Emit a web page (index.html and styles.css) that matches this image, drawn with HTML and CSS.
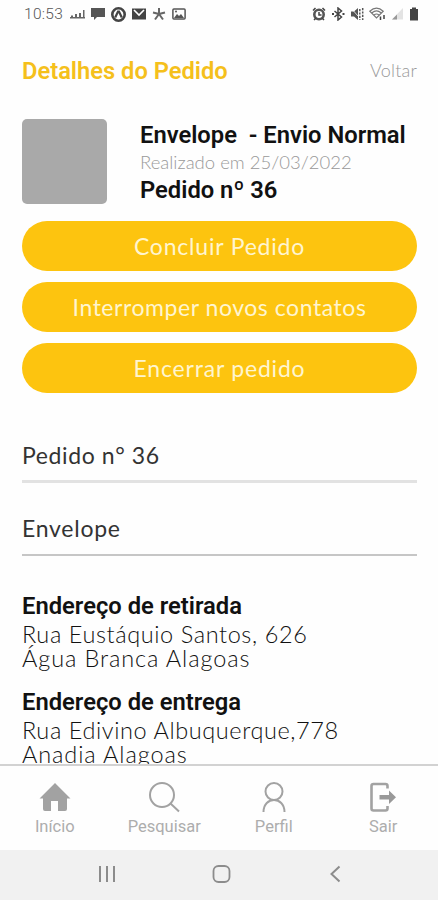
FILE: index.html
```html
<!DOCTYPE html>
<html lang="pt-BR">
<head>
  <meta charset="UTF-8" />
  <meta name="viewport" content="width=device-width, initial-scale=1.0" />
  <title>Detalhes do Pedido</title>
  <link rel="stylesheet" href="styles.css">
</head>
<body>

  <!-- Status bar -->
  <div class="status-bar">
    <span class="clock">10:53</span>
    <div class="status-left">
      <svg width="15" height="14" viewBox="0 0 15 14" fill="#666"><path d="M0 10h15v1.600H0zM1 8.500h2V10H1zM5 7h2v3H5zM9 6h2v4H9zM13 3h1.500v7H13z"/></svg>
      <svg width="14" height="14" viewBox="0 0 14 14" fill="#555"><path d="M0 1h14v9H6l-3 3v-3H0z"/></svg>
      <svg width="15" height="15" viewBox="0 0 15 15"><circle cx="7.500" cy="7.500" r="6.200" fill="none" stroke="#444" stroke-width="2.600"/><path d="M4.200 10.500L7 4.500h1l2.800 6" fill="none" stroke="#444" stroke-width="2.200"/></svg>
      <svg width="14" height="14" viewBox="0 0 14 14"><path d="M0 1.500h14v11H0z" fill="#444"/><path d="M2 3l5 5 5-5" fill="none" stroke="#fff" stroke-width="1.600"/></svg>
      <svg width="14" height="14" viewBox="0 0 14 14" fill="none" stroke="#666" stroke-width="2"><path d="M7 1v5M7 7L1 5.500M7 7l6-1.500M7 7l-4 5.500M7 7l4 5.500"/></svg>
      <svg width="14" height="14" viewBox="0 0 14 14"><rect x=".9" y="1.900" width="12.200" height="10.200" rx="1" fill="none" stroke="#555" stroke-width="1.500"/><path d="M2 11l3-4 2 2 2-2 3 4z" fill="#555"/><circle cx="4" cy="4.500" r="1" fill="#555"/></svg>
    </div>
    <div class="status-right">
      <svg width="14" height="14" viewBox="0 0 14 14"><circle cx="7" cy="7.500" r="4.700" fill="none" stroke="#555" stroke-width="2.600"/><path d="M7 5v3h2.500M1 3.500L3.500 1M13 3.500L10.500 1M2 13l2-2M12 13l-2-2" fill="none" stroke="#444" stroke-width="1.500"/></svg>
      <svg width="14" height="14" viewBox="0 0 14 14" fill="none" stroke="#444" stroke-width="1.500"><path d="M3.500 4l7 6-3.500 3V1l3.500 3-7 6"/><path d="M1 7h2M11.500 7h2" stroke-width="1.800"/></svg>
      <svg width="14" height="14" viewBox="0 0 14 14"><path d="M1 4.500h3L8 1v12L4 9.500H1z" fill="#555"/><path d="M1 1l7 8" stroke="#fff" stroke-width=".8"/><path d="M9.800 2v11M12.700 1v12" stroke="#555" stroke-width="1.500" stroke-dasharray="2.200 1.200"/></svg>
      <svg width="17" height="14" viewBox="0 0 17 14" fill="none" stroke="#777" stroke-width="1.200"><path d="M.8 4.200q6.700-6 13.400 0L7.500 11zM3 5.800q4.500-4 9 0M5 8q2.500-2 5 0"/><path d="M11.500 9.500v3.500M15 8v4" stroke="#444" stroke-width="1.500"/></svg>
      <svg width="13" height="14" viewBox="0 0 13 14"><path d="M1 12.500L12 1v11.500z" fill="#e3e3e3"/><path d="M1 12.500L6 7.500v5z" fill="#999"/></svg>
      <svg width="10" height="14" viewBox="0 0 10 14" fill="#444"><path d="M3 .5h4V2h2v11.500H1V2h2z"/></svg>
    </div>
  </div>

  <!-- Order details -->
  <main class="content">
    <header class="page-header">
      <h1>Detalhes do Pedido</h1>
      <a class="back">Voltar</a>
    </header>

    <section class="summary">
      <div class="thumb"></div>
      <div class="summary-info">
        <h2>Envelope&nbsp; - Envio Normal</h2>
        <p class="date">Realizado em 25/03/2022</p>
        <h2>Pedido nº 36</h2>
      </div>
    </section>

    <div class="actions">
      <button class="btn">Concluir Pedido</button>
      <button class="btn btn-stop">Interromper novos contatos</button>
      <button class="btn">Encerrar pedido</button>
    </div>

    <div class="field field-order">Pedido n° 36</div>
    <div class="field field-type">Envelope</div>

    <section class="address pickup">
      <h3>Endereço de retirada</h3>
      <p class="street">Rua Eustáquio Santos, 626</p>
      <p>Água Branca Alagoas</p>
    </section>

    <section class="address delivery">
      <h3>Endereço de entrega</h3>
      <p class="street">Rua Edivino Albuquerque,778</p>
      <p>Anadia Alagoas</p>
    </section>
  </main>

  <!-- Tabs -->
  <nav class="tabs">
    <a class="tab">
      <svg width="32" height="32" viewBox="0 0 32 32" fill="#a2a2a2"><path d="M16 1L.5 16.500H4v10.500q0 2 2 2h6V19h7v10h7q2 0 2-2V16.500h3.500z"/></svg>
      <span>Início</span>
    </a>
    <a class="tab">
      <svg width="32" height="32" viewBox="0 0 32 32" fill="none" stroke="#a2a2a2" stroke-width="2"><circle cx="14" cy="13" r="12"/><path d="M22.500 21.500l8.500 8"/></svg>
      <span>Pesquisar</span>
    </a>
    <a class="tab">
      <svg width="32" height="32" viewBox="0 0 32 32" fill="none" stroke="#a2a2a2" stroke-width="2"><circle cx="16" cy="9.500" r="8.500"/><path d="M5.500 30c0-16 21-16 21 0"/></svg>
      <span>Perfil</span>
    </a>
    <a class="tab">
      <svg width="32" height="32" viewBox="0 0 32 32"><path d="M20.500 6.500V4q0-2-2-2H6.500q-2 0-2 2v22.500q0 2 2 2h12q2 0 2-2V24" fill="none" stroke="#a2a2a2" stroke-width="2.600"/><path d="M12.500 13H22V8.500l7 6.800-7 6.700v-4.500h-9.500z" fill="#999"/></svg>
      <span>Sair</span>
    </a>
  </nav>

  <!-- Android navigation -->
  <div class="system-nav">
    <svg width="20" height="20" viewBox="0 0 20 20" fill="none" stroke="#8c8c8c" stroke-width="2"><path d="M3 2v16M10 2v16M17 2v16"/></svg>
    <svg width="20" height="20" viewBox="0 0 20 20" fill="none" stroke="#8c8c8c" stroke-width="1.800"><rect x="1.500" y="2" width="16" height="16" rx="5"/></svg>
    <svg width="20" height="20" viewBox="0 0 20 20" fill="none" stroke="#8c8c8c" stroke-width="2"><path d="M13.500 2.500L5.500 10l8 7.500"/></svg>
  </div>

</body>
</html>
```
FILE: styles.css
```css
* {
  box-sizing: border-box;
}
html, body {
  margin: 0; padding: 0; height: 100%;
  overflow: hidden;
}
body {
  display: flex;
  flex-direction: column;
  background: #fefefe;
  color: #333;
  font-family: Lato, sans-serif;
}
h1, h2, h3, p {
  margin: 0;
  white-space: nowrap;
}
svg {
  display: block;
}

/* Status bar */
.status-bar {
  flex: none;
  display: flex;
  align-items: center;
  height: 28px;
  padding: 0 20px 0 24px;
}
.clock {
  width: 46px;
  font-family: Roboto, sans-serif;
  font-size: 15.5px;
  font-weight: 300;
  letter-spacing: 0.3px;
  color: #555;
}
.status-left {
  display: flex;
  align-items: center;
  gap: 6px;
}
.status-right {
  display: flex;
  align-items: center;
  gap: 5px;
  margin-left: auto;
  margin-right: -1px;
}

/* Content */
.content {
  flex: 1;
  min-height: 0;
  overflow: hidden;
  padding: 27px 21px 0 22px;
}
.page-header {
  display: flex;
  justify-content: space-between;
  align-items: center;
  height: 32px;
}
h1 {
  font-family: Roboto, sans-serif;
  font-size: 23.7px;
  font-weight: 600;
  color: #f5c01b;
}
.back {
  font-size: 18px;
  font-weight: 300;
  line-height: 24px;
  letter-spacing: 0.2px;
  padding-bottom: 2px;
  color: #999;
}
.summary {
  display: flex;
  gap: 33px;
  margin-top: 32px;
}
.thumb {
  width: 85px;
  height: 85px;
  border-radius: 5px;
  background: #a9a9a9;
}
.summary-info {
  height: 85px;
  padding-top: 2px;
}
h2, h3 {
  font-family: Roboto, sans-serif;
  font-size: 23.75px;
  font-weight: 600;
  line-height: 29px;
  color: #111;
}
.date {
  font-size: 18.5px;
  font-weight: 300;
  line-height: 24px;
  color: #999;
}
.date + h2 {
  margin-top: 2px;
}

.actions {
  display: flex;
  flex-direction: column;
  gap: 11px;
  margin-top: 17px;
}
.btn {
  height: 50px;
  padding: 0;
  border: none;
  border-radius: 25px;
  background: #fdc40f;
  color: #fff5cf;
  font-family: Lato, sans-serif;
  font-size: 23px;
  font-weight: 400;
  letter-spacing: 0.8px;
}
.btn-stop {
  letter-spacing: 0.55px;
}

.field {
  font-size: 23px;
  line-height: 30px;
  letter-spacing: 0.75px;
}
.field-order {
  margin-top: 47px;
  padding-bottom: 10px;
  border-bottom: 3px solid #e2e2e2;
  letter-spacing: 0.6px;
}
.field-type {
  margin-top: 30px;
  padding-bottom: 11px;
  border-bottom: 2px solid #c6c6c6;
}

.address {
  font-size: 23.5px;
  font-weight: 300;
  line-height: 24px;
  letter-spacing: 0.9px;
  color: #111;
}
.address h3 {
  line-height: 32px;
  letter-spacing: 0;
}
.street {
  letter-spacing: 0.6px;
}
.pickup {
  margin-top: 34px;
}
.delivery {
  margin-top: 16px;
}

/* Tabs */
.tabs {
  flex: none;
  display: grid;
  grid-template-columns: repeat(4, 1fr);
  height: 86px;
  border-top: 2px solid #d2d2d2;
  background: #fefefe;
}
.tab {
  display: flex;
  flex-direction: column;
  align-items: center;
  padding-top: 16px;
  font-family: Roboto, sans-serif;
  font-size: 16.5px;
  line-height: 26px;
  color: #adadad;
}

/* Android navigation */
.system-nav {
  flex: none;
  display: flex;
  justify-content: space-between;
  height: 50px;
  padding: 14px 92px 0 97px;
  background: #f1f1f1;
}
```
